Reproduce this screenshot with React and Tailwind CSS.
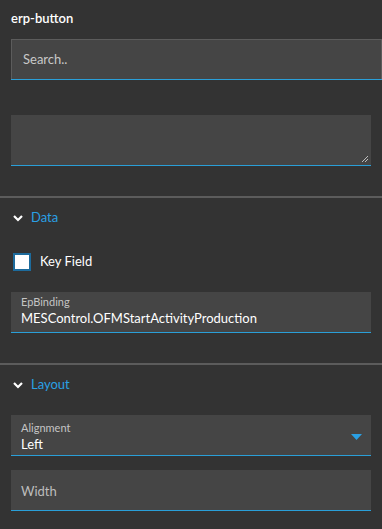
function SectionHeader({ title }) {
    return (
        <div className="flex items-center h-[40px] pl-[13px]">
            <svg width="10" height="8" viewBox="0 0 10 8" className="mr-[8px]">
                <path d="M1 2 L5 6 L9 2" fill="none" stroke="#ffffff" strokeWidth="2.2" />
            </svg>
            <span className="text-[13px] text-[#2aa0e4]">{title}</span>
        </div>
    );
}

export default function App() {
    return (
        <div
            className="w-[382px] h-[529px] bg-[#333333] text-white overflow-hidden"
            style={{ fontFamily: 'Lato, "Open Sans", sans-serif' }}
        >
            {/* Title */}
            <div className="px-[11px] pt-[9px] h-[39px] text-[13px] font-semibold text-white">erp-button</div>

            {/* Search */}
            <div className="pl-[11px]">
                <div className="h-[41px] bg-[#454545] border border-[#5c5c5c] border-b-0 flex flex-col">
                    <div className="flex-1 flex items-center pl-[11px] text-[13px] text-[#c8c8c8]">Search..</div>
                    <div className="h-px bg-[#2a9fd8] -mx-px" />
                </div>
            </div>

            {/* Textarea */}
            <div className="px-[11px] pt-[35px]">
                <div className="relative h-[51px] bg-[#454545] border-b border-[#2a9fd8]">
                    <svg width="8" height="8" viewBox="0 0 8 8" className="absolute right-[2px] bottom-[2px]">
                        <path d="M1 7 L7 1 M4 7 L7 4" stroke="#bdbdbd" strokeWidth="1" />
                    </svg>
                </div>
            </div>

            <div className="h-[30px]" />
            <div className="h-[2px] bg-[#5c5c5c]" />

            {/* Data */}
            <SectionHeader title="Data" />
            <div className="flex items-center pl-[13px] h-[48px]">
                <div className="w-[18px] h-[18px] bg-white border-2 border-[#1d6b9c] mr-[9px]" />
                <span className="text-[13px] text-white">Key Field</span>
            </div>
            <div className="px-[11px] pt-[6px]">
                <div className="h-[41px] bg-[#454545] border-b border-[#2a9fd8] px-[10px] pt-[3px] flex flex-col">
                    <span className="text-[11px] leading-[14px] text-[#c4c4c4]">EpBinding</span>
                    <span className="text-[13px] leading-[18px] text-white">MESControl.OFMStartActivityProduction</span>
                </div>
            </div>

            <div className="h-[30px]" />
            <div className="h-[2px] bg-[#5c5c5c]" />

            {/* Layout */}
            <SectionHeader title="Layout" />
            <div className="px-[11px] pt-[10px]">
                <div className="relative h-[41px] bg-[#454545] border-b border-[#2a9fd8] px-[10px] pt-[5px] flex flex-col">
                    <span className="text-[11px] leading-[16px] text-[#c4c4c4]">Alignment</span>
                    <span className="text-[13px] leading-[17px] text-white">Left</span>
                    <svg width="11" height="6" viewBox="0 0 11 6" className="absolute right-[9px] top-[19px]">
                        <path d="M0 0 L11 0 L5.5 6 Z" fill="#2aa0e4" />
                    </svg>
                </div>
            </div>
            <div className="px-[11px] pt-[14px]">
                <div className="h-[41px] bg-[#454545] border-b border-[#2a9fd8] px-[10px] flex items-center pt-[4px]">
                    <span className="text-[13px] text-[#bdbdbd]">Width</span>
                </div>
            </div>
        </div>
    );
}
